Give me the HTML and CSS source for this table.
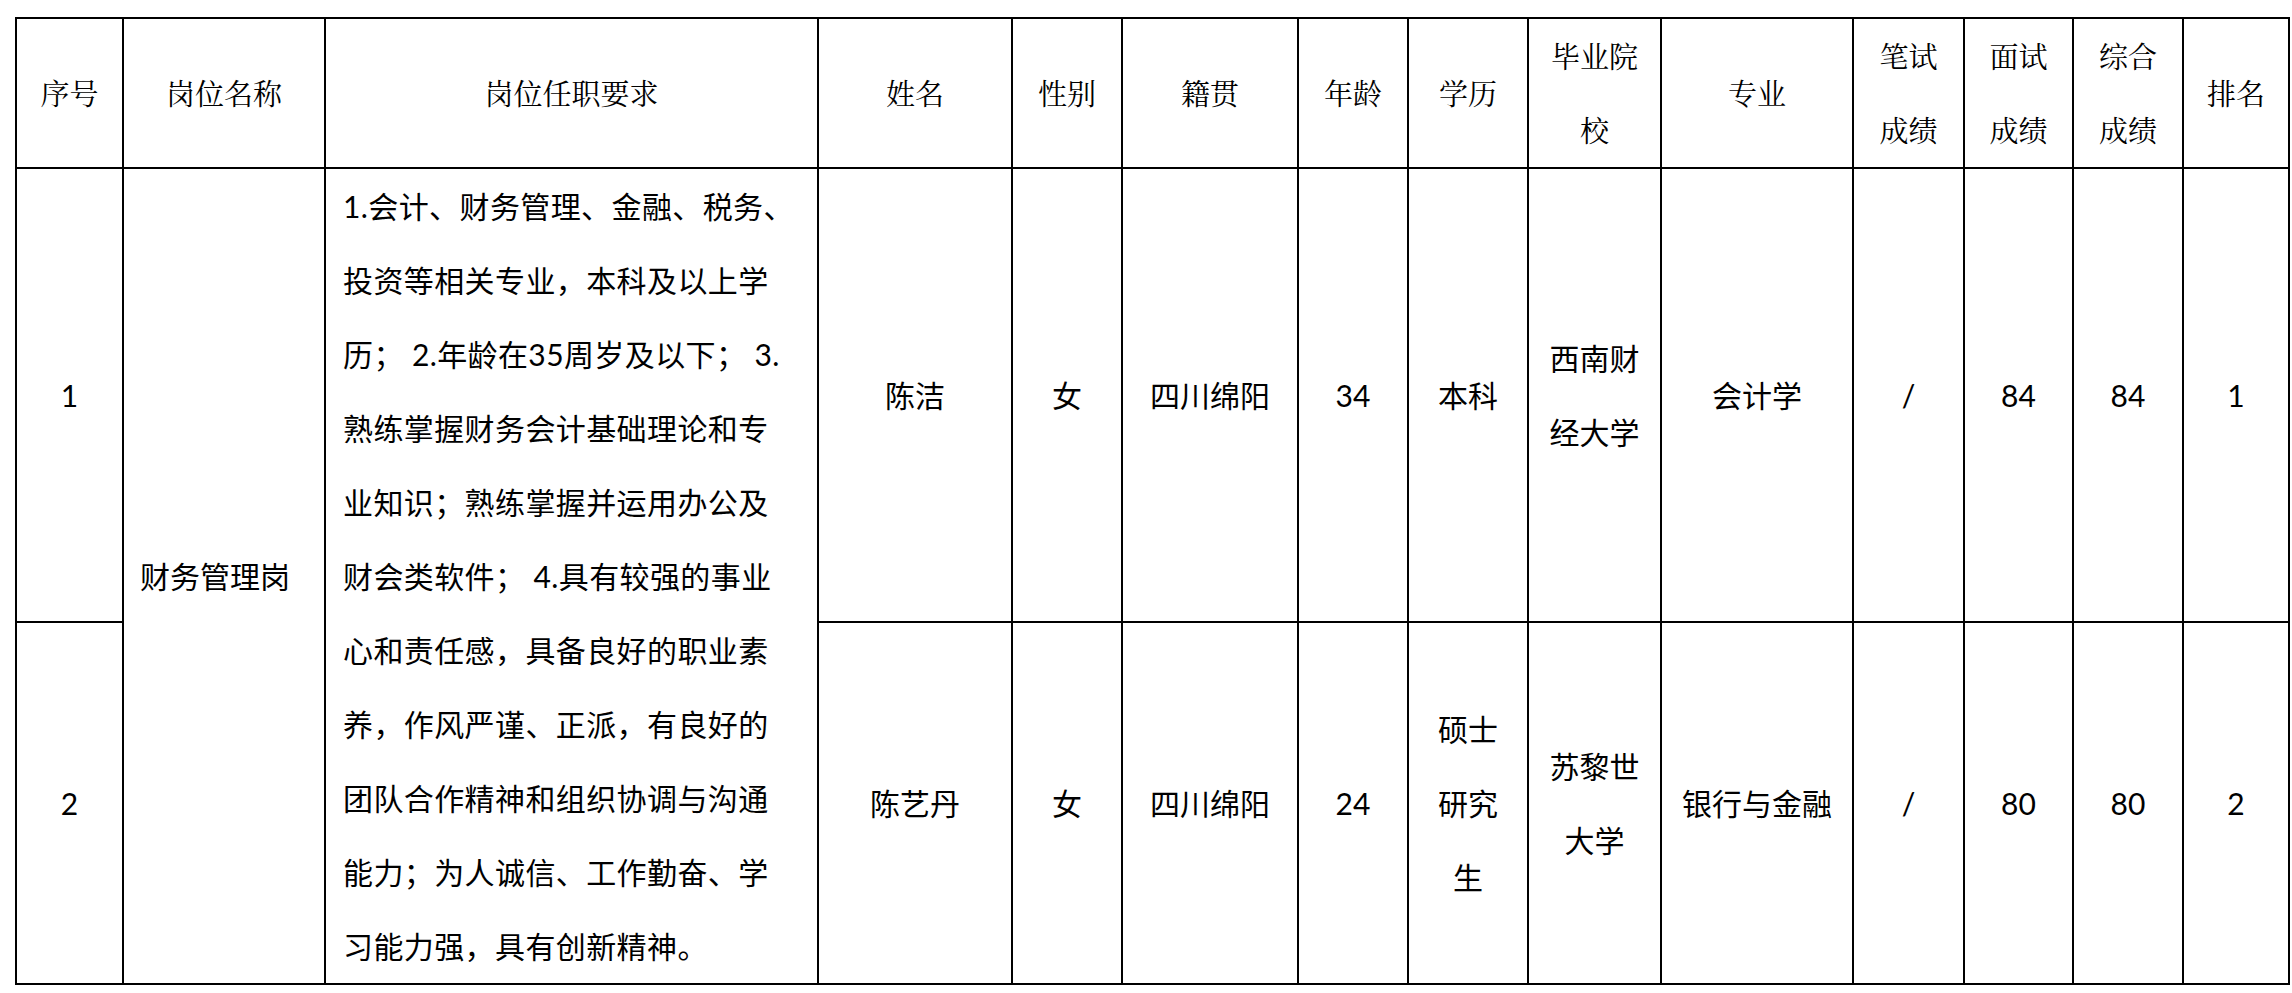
FILE: index.html
```html
<!DOCTYPE html>
<html lang="zh-CN">
<head>
<meta charset="utf-8">
<title>财务管理岗 面试成绩</title>
<link rel="stylesheet" href="styles.css">
</head>
<body>
<div class="page">
<table class="grid">
  <colgroup>
    <col class="c-no"><col class="c-post"><col class="c-req"><col class="c-name"><col class="c-sex"><col class="c-origin"><col class="c-age"><col class="c-edu"><col class="c-school"><col class="c-major"><col class="c-written"><col class="c-interview"><col class="c-total"><col class="c-rank">
  </colgroup>
  <thead>
    <tr class="row-head">
      <th>序号</th>
      <th>岗位名称</th>
      <th>岗位任职要求</th>
      <th>姓名</th>
      <th>性别</th>
      <th>籍贯</th>
      <th>年龄</th>
      <th>学历</th>
      <th>毕业院校</th>
      <th>专业</th>
      <th>笔试成绩</th>
      <th>面试成绩</th>
      <th>综合成绩</th>
      <th>排名</th>
    </tr>
  </thead>
  <tbody>
    <tr class="row-one">
      <td>1</td>
      <td rowspan="2" class="post">财务管理岗</td>
      <td rowspan="2" class="req">1.会计、财务管理、金融、税务、<br>投资等相关专业，本科及以上学<br>历； 2.年龄在35周岁及以下； 3.<br>熟练掌握财务会计基础理论和专<br>业知识；熟练掌握并运用办公及<br>财会类软件； 4.具有较强的事业<br>心和责任感，具备良好的职业素<br>养，作风严谨、正派，有良好的<br>团队合作精神和组织协调与沟通<br>能力；为人诚信、工作勤奋、学<br>习能力强，具有创新精神。</td>
      <td>陈洁</td>
      <td>女</td>
      <td>四川绵阳</td>
      <td>34</td>
      <td>本科</td>
      <td>西南财经大学</td>
      <td>会计学</td>
      <td>/</td>
      <td>84</td>
      <td>84</td>
      <td>1</td>
    </tr>
    <tr class="row-two">
      <td>2</td>
      <td>陈艺丹</td>
      <td>女</td>
      <td>四川绵阳</td>
      <td>24</td>
      <td>硕士研究生</td>
      <td>苏黎世大学</td>
      <td>银行与金融</td>
      <td>/</td>
      <td>80</td>
      <td>80</td>
      <td>2</td>
    </tr>
  </tbody>
</table>
</div>
</body>
</html>
```

FILE: styles.css
```css
html, body {
  margin: 0;
  padding: 0;
  background: #ffffff;
}

.page {
  padding: 17px 0 0 15px;
}

.grid {
  border-collapse: collapse;
  table-layout: fixed;
  width: 2273px;
  color: #000000;
  font-family: "Lato", "Noto Sans CJK SC", sans-serif;
  font-size: 30px;
}

.c-no { width: 107px; }
.c-post { width: 202px; }
.c-req { width: 493px; }
.c-name { width: 194px; }
.c-sex { width: 110px; }
.c-origin { width: 176px; }
.c-age { width: 110px; }
.c-edu { width: 120px; }
.c-school { width: 133px; }
.c-major { width: 192px; }
.c-written { width: 111px; }
.c-interview { width: 109px; }
.c-total { width: 110px; }
.c-rank { width: 106px; }

.grid th,
.grid td {
  border: 2px solid #000000;
  padding: 0 17px;
  text-align: center;
  vertical-align: middle;
  line-height: 74px;
  word-break: break-all;
}

.grid th {
  font-family: "Noto Serif CJK SC", "Noto Sans CJK SC", serif;
  font-weight: normal;
  font-size: 29px;
}

.row-head { height: 150px; }
.row-one { height: 453px; }
.row-two { height: 362px; }

.grid td.post {
  text-align: left;
  padding-left: 16px;
}

.grid td.req {
  text-align: left;
  white-space: nowrap;
  padding: 0 0 0 17px;
  letter-spacing: 0.4px;
}
```
